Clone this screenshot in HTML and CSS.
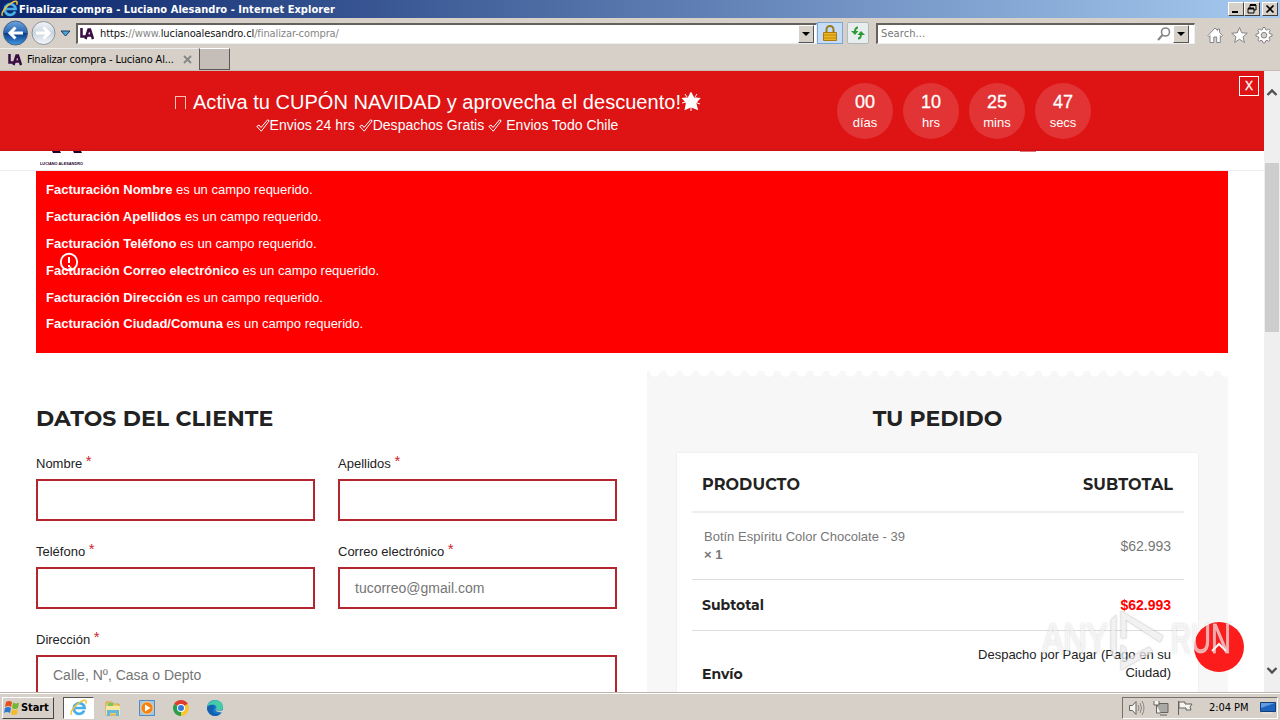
FILE: index.html
```html
<!DOCTYPE html>
<html lang="es">
<head>
<meta charset="utf-8">
<title>Finalizar compra - Luciano Alesandro</title>
<link rel="stylesheet" href="styles.css">
</head>
<body>
<svg class="defs" width="0" height="0" aria-hidden="true">
  <defs>
    <linearGradient id="blue" x1="0" y1="0" x2="0" y2="1"><stop offset="0" stop-color="#6fa3dc"/><stop offset=".48" stop-color="#2867b5"/><stop offset=".52" stop-color="#0b3c86"/><stop offset="1" stop-color="#3f9ae6"/></linearGradient>
    <linearGradient id="pale" x1="0" y1="0" x2="0" y2="1"><stop offset="0" stop-color="#f2f5f8"/><stop offset=".5" stop-color="#cbd5de"/><stop offset="1" stop-color="#f5f9fc"/></linearGradient>
    <symbol id="ie" viewBox="0 0 18 18">
      <path d="M14.2 11.6A5.4 5.4 0 1 1 14.6 9H5.2" fill="none" stroke="#48aee8" stroke-width="2.7"/>
      <path d="M1.500 15.800C-.6 13.400 5 5.800 11 2.600c4.500-2.300 6-1.300 4.600 2" fill="none" stroke="#f0c43a" stroke-width="1.500"/>
    </symbol>
    <symbol id="la" viewBox="0 0 14 12">
      <path d="M1.500 0v8.500h5M5.500 11l3-9.500h1.500l3 9.500M7 7.500h5" fill="none" stroke="#3a0d42" stroke-width="2.500"/>
    </symbol>
    <symbol id="check" viewBox="0 0 14 13">
      <path d="M.8 7.500l2.200-1.500 2 2.500L11.600.8l1.600 1L5.300 12.200z" fill="none" stroke="#fff" stroke-width="1"/>
    </symbol>
  </defs>
</svg>
<div class="window">
  <header class="titlebar">
    <svg class="title-icon" width="18" height="18"><use href="#ie"/></svg>
    <span class="title-text">Finalizar compra - Luciano Alesandro - Internet Explorer</span>
    <div class="controls">
      <span class="control"><svg width="14" height="12"><path d="M3 9h6" stroke="#000" stroke-width="2"/></svg></span>
      <span class="control"><svg width="14" height="12"><path d="M5 5V2h6v5H9M3 5.500h6V10H3z" fill="none" stroke="#000"/><path d="M5 2h6M3 5.500h6" stroke="#000" stroke-width="2"/></svg></span>
      <span class="control control-close"><svg width="14" height="12"><path d="M3.500 2.500l7 7m0-7l-7 7" stroke="#000" stroke-width="1.700"/></svg></span>
    </div>
  </header>

  <nav class="toolbar">
    <svg class="history" width="76" height="30" viewBox="0 0 76 30">
      <circle cx="15.500" cy="15" r="12" fill="url(#blue)" stroke="#49627e"/>
      <circle cx="43.500" cy="15" r="11.500" fill="url(#pale)" stroke="#8b939b"/>
      <path d="M23 15H10m5.500-5.500L10 15l5.500 5.500" fill="none" stroke="#fff" stroke-width="3"/>
      <path d="M36 15h13m-5.500-5.500L49 15l-5.500 5.500" fill="none" stroke="#fff" stroke-width="3"/>
      <path d="M61 13h9l-4.500 5z" fill="#4ea4d9" stroke="#1d3c63"/>
    </svg>
    <div class="address">
      <svg width="14" height="12"><use href="#la"/></svg>
      <span class="url"><b>https:</b>//www.<b>lucianoalesandro.cl</b>/finalizar-compra/</span>
      <span class="drop"></span>
    </div>
    <span class="lock"><svg width="14" height="16" viewBox="0 0 14 16"><path d="M3.500 8V4.500a3.500 3.500 0 0 1 7 0V8" fill="none" stroke="#9a7a1c" stroke-width="2"/><path d="M.5 7.500h13v8H.5z" fill="#eeb422" stroke="#ab7b12"/><path d="M1 10h12M1 13h12" stroke="#bf8a16"/></svg></span>
    <span class="refresh"><svg width="16" height="16" viewBox="0 0 16 16"><path d="M8 2.500Q5 2.500 5 7M8 13.500q3 0 3-4.500" fill="none" stroke="#2c9b35" stroke-width="2"/><path d="M1 6h7.500L5 10zM7.500 10H15l-4-4z" fill="#2c9b35"/></svg></span>
    <div class="search">
      <span class="search-text">Search...</span>
      <svg width="14" height="14" viewBox="0 0 14 14"><circle cx="8.500" cy="5" r="4" fill="none" stroke="#858585" stroke-width="1.600"/><path d="M5.500 8l-4.500 5" stroke="#858585" stroke-width="2"/></svg>
      <span class="drop"></span>
    </div>
    <svg class="tools" width="70" height="18" viewBox="0 0 70 18">
      <g fill="#fff" stroke="#858585" stroke-width="1">
        <path d="M1 9.500L8 2l2.500 2.500V3h2v3.500L15.500 9.500l-1.200 1.200-1-1V16.500H9.700V11H6.800v5.500H3V9.700l-1 1z"/>
        <path d="M32.500 1.500l2.200 5.300 5.600.4-4.300 3.600 1.400 5.600-4.900-3.100-4.900 3.100L29 10.800l-4.300-3.600 5.600-.4z"/>
        <path d="M56 1.500h2l.5 2 1.500.6 1.800-1.100 1.400 1.400-1.100 1.800.6 1.500 2.300.5v2l-2.300.5-.6 1.500 1.100 1.800-1.400 1.400L60 14.300l-1.500.6-.5 2h-2l-.5-2-1.500-.6-1.800 1.100-1.400-1.400 1.100-1.800-.6-1.500-2.300-.5v-2l2.300-.5.6-1.500-1.100-1.800L52.200 3 54 4.100l1.500-.6z"/>
        <circle cx="57" cy="9.200" r="2.800" fill="#d6d0c8"/>
      </g>
    </svg>
  </nav>

  <div class="tabs">
    <div class="tab">
      <svg width="14" height="12"><use href="#la"/></svg>
      <span class="tab-text">Finalizar compra - Luciano Al...</span>
      <svg width="9" height="9"><path d="M1 1l7 7m0-7L1 8" stroke="#858585" stroke-width="1.800"/></svg>
    </div>
    <div class="new-tab"></div>
  </div>

  <div class="viewport">
    <main class="page">
      <section class="promo">
        <div class="promo-copy">
          <div class="promo-title"><span class="missing"></span><span>Activa tu CUPÓN NAVIDAD y aprovecha el descuento!</span><svg width="20" height="20" viewBox="0 0 20 20"><path d="M10 1l2.600 5 5.600.5-3.700 4.200 1.600 6.300-6.100-2.400L4.500 17l1.200-6.300L2 6.500 7.400 6z" fill="#fff" stroke="#fff" stroke-width="1.500"/><path d="M4 2l2 3M16 2l-2 3M1 11l4-1M19 12l-4-1.500M10 19v-4" stroke="#fff"/></svg></div>
          <div class="promo-sub"><svg width="14" height="13"><use href="#check"/></svg><span>Envios 24 hrs</span><svg class="spaced" width="14" height="13"><use href="#check"/></svg><span>Despachos Gratis</span><svg class="spaced" width="14" height="13"><use href="#check"/></svg><span class="spaced">Envios Todo Chile</span></div>
        </div>
        <div class="timer">
          <div class="unit"><b>00</b><span>días</span></div>
          <div class="unit"><b>10</b><span>hrs</span></div>
          <div class="unit"><b>25</b><span>mins</span></div>
          <div class="unit"><b>47</b><span>secs</span></div>
        </div>
        <div class="promo-close">X</div>
      </section>
      <div class="site-header">
        <svg class="brand" width="45" height="18" viewBox="0 0 45 18"><path d="M12 0h8l1 2h-8zM33 0h8l1 2h-8z" fill="#24002e"/><text x="0" y="13.500" textLength="43" lengthAdjust="spacingAndGlyphs">LUCIANO ALESANDRO</text></svg>
        <span class="header-mark"></span>
      </div>
      <div class="content">
        <div class="errors">
          <ul>
            <li><b>Facturación Nombre</b> es un campo requerido.</li>
            <li><b>Facturación Apellidos</b> es un campo requerido.</li>
            <li><b>Facturación Teléfono</b> es un campo requerido.</li>
            <li><b>Facturación Correo electrónico</b> es un campo requerido.</li>
            <li><b>Facturación Dirección</b> es un campo requerido.</li>
            <li><b>Facturación Ciudad/Comuna</b> es un campo requerido.</li>
          </ul>
          <svg class="alert-icon" width="20" height="20"><circle cx="10" cy="10" r="8.200" fill="none" stroke="#fff" stroke-width="1.900"/><path d="M10 5v6m0 2v2" stroke="#fff" stroke-width="2"/></svg>
        </div>
        <div class="columns">
          <section class="customer">
            <h2>DATOS DEL CLIENTE</h2>
            <div class="fields">
              <div class="field"><label>Nombre <i>*</i></label><div class="input"></div></div>
              <div class="field"><label>Apellidos <i>*</i></label><div class="input"></div></div>
              <div class="field"><label>Teléfono <i>*</i></label><div class="input"></div></div>
              <div class="field"><label>Correo electrónico <i>*</i></label><div class="input">tucorreo@gmail.com</div></div>
              <div class="field wide"><label>Dirección <i>*</i></label><div class="input">Calle, Nº, Casa o Depto</div></div>
            </div>
          </section>
          <section class="order">
            <h2>TU PEDIDO</h2>
            <div class="card">
              <div class="row head"><span>PRODUCTO</span><span>SUBTOTAL</span></div>
              <div class="row item"><div class="product">Botín Espíritu Color Chocolate - 39<br><b>× 1</b></div><span class="price">$62.993</span></div>
              <div class="row subtotal"><span class="row-name">Subtotal</span><span class="total">$62.993</span></div>
              <div class="row shipping"><span class="row-name">Envío</span><span class="ship-note">Despacho por Pagar (Pago en su<br>Ciudad)</span></div>
            </div>
          </section>
        </div>
      </div>
      <div class="to-top"><svg width="20" height="14"><path d="M3 11l7-7 7 7" fill="none" stroke="#fff" stroke-width="2"/></svg></div>
      <svg class="watermark" width="204" height="66" viewBox="0 0 204 66">
        <g class="mark-edge"><text x="5" y="45" textLength="66" lengthAdjust="spacingAndGlyphs">ANY</text><text x="134" y="45" textLength="60" lengthAdjust="spacingAndGlyphs">RUN</text></g>
        <path d="M74 12l5-5v43l-5-4zM84 3l42 25-3 6L89 12v18h-5zM84 37l5 3v12l23-13 4 5-32 18z" fill="#fff" fill-opacity=".65" stroke="#999" stroke-opacity=".2"/>
      </svg>
    </main>
    <aside class="scrollbar">
      <svg width="16" height="12"><path d="M3.500 9L8 4.500 12.500 9" fill="none" stroke="#505050" stroke-width="2.300"/></svg>
      <span class="thumb"></span>
      <svg class="down" width="16" height="12"><path d="M3.500 3L8 7.500 12.500 3" fill="none" stroke="#505050" stroke-width="2.300"/></svg>
    </aside>
  </div>

  <footer class="taskbar">
    <div class="start"><svg width="16" height="16" viewBox="0 0 16 16"><path d="M2 2q3-2 6 0L7 7Q4 5 1 7z" fill="#e6501e"/><path d="M9 2.500q3 2 6 0L14 8q-3 2-6 0z" fill="#78b530"/><path d="M1 8q3-2 6 0l-1 5q-3-2-6 0z" fill="#2d79ce"/><path d="M8 9q3 2 6 0l-1 5q-3 2-6 0z" fill="#f4bd28"/></svg><span>Start</span></div>
    <div class="task active"><svg width="18" height="18"><use href="#ie"/></svg></div>
    <div class="task"><svg width="18" height="18" viewBox="0 0 18 18"><path d="M2 3h6l1 2h6v11H2z" fill="#edce68" stroke="#c9a646"/><path d="M4 4h5v3H4z" fill="#7bc262"/><path d="M2 7h14v9h-3v-4H6v4H2z" fill="#f6e6a0"/><path d="M3 17v-6h12v6h-3v-3H6v3z" fill="#65b8db"/></svg></div>
    <div class="task"><svg width="18" height="18" viewBox="0 0 18 18"><path d="M1.500 1.500h15v15h-15z" fill="#9dc8ed" stroke="#5389bb"/><circle cx="9" cy="9" r="6.200" fill="#f28316" stroke="#fbd49a"/><path d="M7 5.500l5.500 3.500L7 12.500z" fill="#fff"/></svg></div>
    <div class="task"><svg width="18" height="18" viewBox="0 0 18 18"><path d="M9 9L2.100 5A8 8 0 0 1 15.900 5z" fill="#df3c30"/><path d="M9 9l6.900-4A8 8 0 0 1 9 17z" fill="#f8c62e"/><path d="M9 9v8A8 8 0 0 1 2.100 5z" fill="#2b9e4c"/><circle cx="9" cy="9" r="4" fill="#fff"/><circle cx="9" cy="9" r="3" fill="#3579dc"/></svg></div>
    <div class="task"><svg width="18" height="18" viewBox="0 0 18 18"><circle cx="9" cy="9" r="8" fill="#1678c8"/><path d="M1 8C3-1 17-1 17 8c0 4-5 5-7 2 2-5-5-6-9-2z" fill="#46cba9"/><path d="M1 8c5-4 9-1 6 3-1 4 5 5 8 3-5 6-14 2-14-6z" fill="#1260af"/><path d="M10 9c-1 3 3 4 7 2l1 2c-4 1-10 0-8-4z" fill="#d6d0c8"/></svg></div>
    <div class="tray">
      <svg width="66" height="18" viewBox="0 0 66 18"><g fill="#f6f4ef" stroke="#65625e"><path d="M1.500 6.500h3L8 2.500v13l-3.500-4h-3z"/><path d="M10 6q2 3 0 6m2-8q3 5 0 10m2-12q4 7 0 14" fill="none" stroke="#8a8782"/><path d="M29 4.500h11v9H29zM32 16h7" fill="#aaa8a5"/><path d="M26 2v4h5V2M28.500 6v8h4"/><path d="M50.500 2v14M51 3h6v2h7l-2 3 1 3h-5v-2h-7z"/></g></svg>
      <span class="clock">2:04 PM</span>
      <svg width="16" height="13" viewBox="0 0 16 13"><path d="M.5 1.500h15v9H.5z" fill="#1e63bd" stroke="#143e7a"/><path d="M1 2h14L1 7z" fill="#5e9de0"/><path d="M2 12h10" stroke="#eee"/></svg>
    </div>
  </footer>
</div>
</body>
</html>
```
FILE: styles.css
```css
* { box-sizing: border-box; }
body { margin: 0; font-family: "Liberation Sans", Arial, sans-serif; }
.defs { position: absolute; }
svg { display: block; flex: none; }
.window { display: flex; flex-direction: column; width: 1280px; height: 720px; overflow: hidden; background: #d6d0c8; }
.titlebar, .toolbar, .tabs, .tab, .controls, .address, .search { display: flex; align-items: center; }
.titlebar, .toolbar, .tabs, .taskbar { flex: none; font-family: "DejaVu Sans Condensed", "DejaVu Sans", sans-serif; white-space: nowrap; }
.titlebar { height: 18px; background: linear-gradient(90deg, #0b266c, #a6caf0); color: #fff; font-size: 11px; font-weight: bold; }
.title-icon { margin-left: 1px; }
.title-text { letter-spacing: .04px; }
.controls { margin-left: auto; margin-right: 2px; }
.control { width: 16px; height: 14px; background: #d6d0c8; border: 1px solid; border-color: #fff #404040 #404040 #fff; }
.control-close { margin-left: 2px; }

.toolbar { height: 30px; }
.address { width: 741px; height: 21px; padding: 0 2px; gap: 6px; background: #fff; border: 1px solid #eee; border-top: 2px solid #65625e; border-left: 2px solid #65625e; }
.url { flex: 1; font-size: 11px; color: #858585; letter-spacing: -.1px; }
.url b { color: #111; font-weight: normal; }
.drop { flex: none; display: grid; place-items: center; width: 16px; height: 18px; background: #d6d0c8; border: 1px solid; border-color: #fff #555 #555 #fff; }
.drop::after { content: ""; border: 4px solid transparent; border-top-color: #000; border-bottom: 0; }
.lock, .refresh { display: grid; place-items: center; height: 22px; border: 1px solid #7ba5d5; }
.lock { width: 26px; background: #c5dcf7; }
.refresh { width: 22px; margin-left: 4px; background: #e8eeee; border-color: #b2b9b9; border-radius: 2px; }
.search { width: 319px; height: 21px; margin-left: 7px; padding: 0 5px 0 3px; gap: 2px; background: #fff; border: 1px solid #eee; border-top: 2px solid #65625e; border-left: 2px solid #65625e; }
.search-text { flex: 1; font-size: 11px; color: #777; letter-spacing: .1px; }
.tools { margin-left: 12px; margin-top: 3px; }

.tabs { height: 23px; align-items: stretch; border-bottom: 1px solid #c9bcb3; }
.tab { width: 198px; padding-left: 8px; gap: 5px; border-top: 1px solid #eee; }
.tab-text { width: 151px; font-size: 11px; color: #000; letter-spacing: -.15px; }
.new-tab { width: 31px; margin-left: 1px; background: #c5bdb7; border: 1px solid #5b5855; border-top-color: #fff; }

.viewport { flex: 1; display: flex; min-height: 0; background: #fff; }
.page { position: relative; width: 1264px; overflow: hidden; background: #fff; }
.promo { position: relative; display: flex; height: 80px; padding-top: 12px; background: #de1314; color: #fff; border-bottom: 2px solid #cf1317; }
.promo-copy { width: 837px; padding: 7px 0 0 38px; display: flex; flex-direction: column; align-items: center; white-space: nowrap; }
.promo-title { display: flex; align-items: center; height: 24px; margin-left: 1px; font-size: 20px; letter-spacing: .03px; }
.missing { width: 11px; height: 13px; margin-right: 7px; border: 1px solid #ffc1b4; border-bottom: 0; }
.promo-sub { display: flex; align-items: center; height: 22px; margin-left: -1px; font-size: 14px; letter-spacing: .02px; }
.spaced { margin-left: 4px; }
.timer { display: flex; gap: 10px; height: 56px; }
.unit { display: flex; flex-direction: column; align-items: center; width: 56px; height: 56px; padding-top: 9px; border-radius: 50%; background: #e23435; font-size: 13px; line-height: 20px; }
.unit b { font-size: 18px; line-height: 21px; font-weight: normal; -webkit-text-stroke: .3px #fff; }
.promo-close { position: absolute; left: 1239px; top: 5px; display: grid; place-items: center; width: 20px; height: 20px; border: 1px solid #fff; font-size: 12px; -webkit-text-stroke: .3px #fff; }
.site-header { display: flex; height: 20px; padding-left: 40px; border-bottom: 1px solid #ececec; }
.brand text { font: bold 4px "Liberation Sans", sans-serif; fill: #24002e; }
.header-mark { width: 16px; height: 1px; margin-left: 935px; background: #df7474; }
.content { width: 1192px; margin-left: 36px; }
.errors { position: relative; height: 182px; margin-bottom: 18px; padding: 5px 10px; background: #f00; color: #fff; font-size: 13px; }
.errors ul { margin: 0; padding: 0; list-style: none; }
.errors li { height: 26.9px; line-height: 27px; white-space: nowrap; }
.alert-icon { position: absolute; left: 23px; top: 81px; }
.columns { display: grid; grid-template-columns: 581px 581px; gap: 30px; }
h2 { margin: 0; font-family: Montserrat, Inter, sans-serif; font-size: 22px; line-height: 30px; color: #222; }
.customer { padding-top: 33px; }
.customer h2 { letter-spacing: .08px; }
.fields { display: grid; grid-template-columns: 279px 279px; column-gap: 23px; margin-top: 15px; }
.field { height: 88px; }
.wide { grid-column: 1 / -1; }
.wide .input { line-height: 36px; }
label { display: block; height: 30px; font-size: 13px; line-height: 29px; color: #222; }
label i { color: #d0232b; font-size: 15px; line-height: 10px; font-style: normal; vertical-align: 2px; }
.input { height: 42px; padding-left: 15px; border: 2px solid #b3262d; font-size: 14px; line-height: 38px; color: #757575; }
.order { position: relative; height: 430px; padding: 33px 30px 0; background: #f7f7f7; }
.order::before { content: ""; position: absolute; left: 0; right: 0; top: -1px; height: 7px; background: radial-gradient(ellipse 6px 7px at 8px 0, #fff 90%, transparent) 0 0 / 16.3px 7px repeat-x; }
.order h2 { text-align: center; }
.card { height: 370px; margin-top: 19px; padding: 3px 14px 0 15px; background: #fff; box-shadow: 0 0 2px #e7e7e7; }
.row { display: flex; justify-content: space-between; align-items: center; padding: 0 13px 0 10px; border-bottom: 1px solid #ddd; }
.head { height: 57px; padding: 2px 11px 0 10px; border-bottom: 2px solid #eee; font: bold 16px Montserrat, Inter, sans-serif; letter-spacing: .1px; color: #222; }
.item { height: 67px; padding-left: 12px; font-size: 14px; color: #777; }
.product { font-size: 13px; line-height: 18px; }
.subtotal { height: 51px; }
.row-name { font: bold 14px Montserrat, Inter, sans-serif; color: #222; }
.total { color: #f00; font-size: 14px; font-weight: bold; }
.shipping { height: 86px; }
.ship-note { margin-top: -20px; text-align: right; font-size: 13px; line-height: 18px; color: #222; }
.to-top { position: absolute; left: 1194px; top: 551px; display: grid; place-items: center; width: 50px; height: 50px; border-radius: 50%; background: #fd1c1c; }
.watermark { position: absolute; left: 1037px; top: 537px; filter: drop-shadow(0 0 1px rgba(100, 100, 100, .4)); }
.mark-edge text { font: 43px "Liberation Sans", sans-serif; fill: #fff; fill-opacity: .6; stroke: #fff; stroke-opacity: .4; stroke-width: 1; }
.scrollbar { display: flex; flex-direction: column; width: 16px; padding-top: 15px; background: #efefef; }
.thumb { width: 14px; height: 169px; margin: 65px 0 0 1px; background: #cdcdcd; }
.down { margin: auto 0 15px; }

.taskbar { display: flex; align-items: center; height: 28px; border-top: 1px solid #bcb5aa; box-shadow: inset 0 1px #fff; padding: 2px 2px 0; font-size: 11px; }
.start { display: flex; align-items: center; gap: 1px; width: 52px; height: 22px; margin-right: 9px; padding-left: 1px; font-weight: bold; font-size: 11px; letter-spacing: -.1px; border: 1px solid; border-color: #fff #444 #444 #fff; }
.task { display: grid; place-items: center; width: 31px; height: 22px; margin-right: 3px; }
.active { background: #fff; border: 1px solid #555; border-right-color: #fff; border-bottom-color: #fff; }
.tray { display: flex; align-items: center; height: 22px; width: 156px; margin-left: auto; padding-left: 5px; border: 1px solid; border-color: #77716b #fff #fff #77716b; }
.clock { width: 51px; margin-left: 15px; letter-spacing: -.05px; }
```
